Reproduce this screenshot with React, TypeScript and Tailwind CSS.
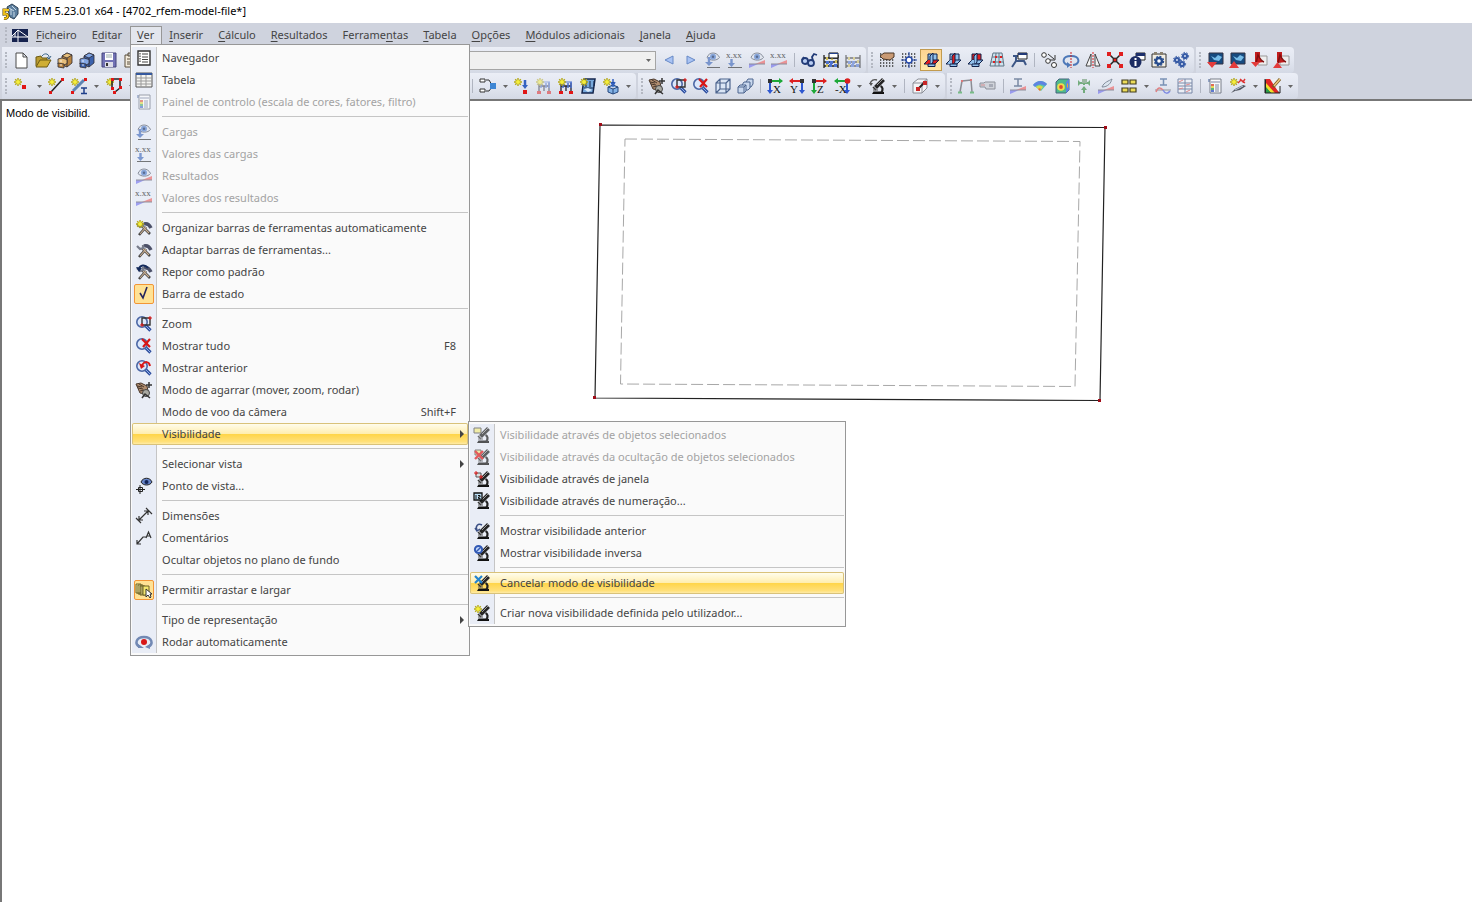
import React, { ReactNode } from "react"

const star = (
  <g>
    <path
      d="M4 0v8M0 4h8M1.2 1.2l5.6 5.6M6.8 1.2L1.2 6.8"
      stroke="#b5a914"
      strokeWidth="1.4"
      fill="none"
    />
    <circle cx="4" cy="4" r="2" fill="#f5ee3c" />
  </g>
)

const lens = (
  <g>
    <path d="M9.5 9.5l5 5" stroke="#31509f" strokeWidth="3.2" />
    <path d="M10 10l4 4" stroke="#8fb0ea" strokeWidth="1" />
    <circle cx="6" cy="6" r="5.2" fill="#dce7fa" stroke="#4a66a5" strokeWidth="1.6" />
  </g>
)

const scope = (
  <g>
    <path d="M3 16l1.500-2.500h7L15 14v2z" fill="#111" />
    <path d="M11.500 8c2.500 1 2.500 4 1 6.500" stroke="#222" strokeWidth="2.200" fill="none" />
    <path d="M6.500 9.500L14.500 1.500" stroke="#262626" strokeWidth="4" />
    <path d="M8 7l6-6" stroke="#9d9d9d" strokeWidth="1" />
    <path d="M4 9l3 3" stroke="#333" strokeWidth="1.600" />
    <path d="M4 12h5" stroke="#555" />
  </g>
)

const eye = (
  <g>
    <path d="M2 5.500C4 -0.500 12 -0.500 14.500 5.500 12 9 5 9 2 5.500z" fill="#dfe4ee" stroke="#5d6472" />
    <circle cx="8" cy="4.800" r="3" fill="#5f88cf" />
    <circle cx="8" cy="4.800" r="1.200" fill="#1f3767" />
  </g>
)

const wedge = (
  <g>
    <path d="M0 16v-4h9z" fill="#7d7df0" />
    <path d="M6 12l10-4v4z" fill="#f07070" />
    <path d="M0 12h16" stroke="#6a6a76" />
  </g>
)

const digits = (
  <text x="-1" y="6" fontSize="9" fontFamily="Liberation Serif, serif" fill="#222">
    x.xx
  </text>
)

const tools = (
  <g fill="none">
    <path d="M3 15l7-8M14 14L6 6" stroke="#444" strokeWidth="2.600" />
    <path d="M4 14l6-7M13 13L7 7" stroke="#cdb194" strokeWidth="1.100" />
    <path d="M8 4c3-1 5 0 7 4" stroke="#4b5068" strokeWidth="3.500" />
    <path d="M1 4l3 3 3-1 0-3" stroke="#777c8a" strokeWidth="2.200" />
  </g>
)

const hand = (
  <g>
    <path d="M0 2l5-1 6 3 1 5-3 3-5-1z" fill="#b08d70" stroke="#49382c" />
    <path d="M1 4l5 1M2 6l5 1M3 2l5 3M4 9l4-1" stroke="#49382c" />
    <circle cx="10" cy="11" r="3.500" fill="#a9a9a2" stroke="#444" />
    <path d="M13 0v6M10 3h6M6 16l3-4 5 4" stroke="#333" fill="none" strokeWidth="1.500" />
  </g>
)

const cabinet = (body: string, light: string) => (
  <g stroke="#2d2b33" strokeWidth="0.800">
    <path d="M5 4l5-3 5 2v8l-5 4-5-2z" fill={body} />
    <path d="M5 4l5-3 5 2-5 3z" fill={light} />
    <path d="M10 6v9" fill="none" />
    <path d="M1 7l4-1 5 1.500v4l-3 1.500-6-1z" fill={light} />
    <path d="M1 11l6 1v4l-6-1z" fill={body} />
    <path d="M3 9h2M3 13h2" stroke="#fff" />
  </g>
)

const supports = (
  <g>
    <path d="M3 5v9M13 5v9M3 8h10M8 8v5" stroke="#223" fill="none" strokeWidth="1.300" />
    <path d="M5 5v5M10 5v5M13 4v6" stroke="#4a70cf" strokeWidth="1.500" />
    <path d="M1 13h4v3H1zM11 13h4v3h-4z" fill="#e01818" />
    <path d="M3 4h11" stroke="#4a70cf" />
  </g>
)

// three crossing work planes, the active one is red
const planes = (square: string, side: string, flat: string) => (
  <g stroke="#10204a" strokeWidth="1">
    <path d="M5 2h9v7H5z" fill={square} />
    <path d="M1 12l4-4h11l-4 4z" fill={flat} />
    <path d="M7 4l3-3v9l-3 4z" fill={side} />
    <path d="M5 8h2v4H3z" fill={flat} stroke="none" />
    <path d="M5 12h7v2.500H5z" fill="#92c1ec" />
  </g>
)

const axes = (a: string, b: string, label: string, flip?: boolean) => (
  <g>
    <path d={flip ? "M1 3h12" : "M3 3h12"} stroke={a} strokeWidth="2" />
    <path d={flip ? "M4 0L0 3l4 3z" : "M12 0l4 3-4 3z"} fill={a} />
    <path d={flip ? "M13 3v11" : "M3 3v11"} stroke={b} strokeWidth="2" />
    <path d={flip ? "M10 12h6l-3 4z" : "M0 12h6l-3 4z"} fill={b} />
    <path d={flip ? "M11 1h4v4h-4z" : "M1 1h4v4H1z"} fill="#333" />
    <text
      x={flip ? 1 : 6}
      y="15"
      fontSize="11"
      fontFamily="Liberation Serif, serif"
      fill="#111"
    >
      {label}
    </text>
  </g>
)

const monitor = (
  <g>
    <path d="M2 1h14v11H2z" fill="#174b80" stroke="#334" />
    <path d="M4 4l4 2 3-3 4 2-3 4-5-1z" fill="#77bce8" />
  </g>
)

const pdf = (
  <g>
    <path d="M7 4h9v9H7z" fill="#eee" stroke="#999" />
    <path d="M4 0h5v10H4z" fill="#c11d1d" />
    <path d="M5 11l2-8c2 4 3 6 6 7" fill="#c11d1d" stroke="#7f1010" strokeWidth="1.500" />
  </g>
)

const page = (
  <g>
    <path d="M1 1h13v3H1z" fill="#7e93bd" />
    <path d="M3 1h11v14H3z" fill="#fff" stroke="#5e6470" />
    <path d="M4 4h9M8 7h4M8 9h4M8 11h4M8 13h4" stroke="#657090" />
    <path d="M4 7h3" stroke="#e05030" strokeWidth="2" />
    <path d="M4 9h3" stroke="#e6d632" strokeWidth="2" />
    <path d="M4 11h3" stroke="#40a860" strokeWidth="2" />
    <path d="M4 13h3" stroke="#4060c8" strokeWidth="2" />
  </g>
)

const abacus = (
  <g>
    <path d="M1 3v13M15 3v13M1 6h14M1 10h14M1 14h14" stroke="#222" strokeWidth="1.300" />
    <path d="M3 9h3v3H3zM7 9h3v3H7zM11 12h3v3h-3zM6 12h3v3H6z" fill="#4d72d0" />
    <path d="M3 5h2v3H3zM8 5h2v3H8zM12 8h2v3h-2zM3 12h2v3H3z" fill="#cfbd58" />
  </g>
)

const dots = (
  <path
    d="M1 2h15M1 5h15M1 8h15M1 11h15M1 14h15"
    stroke="#333"
    strokeWidth="1.300"
    strokeDasharray="1.300 1.700"
  />
)

const icons: Record<string, ReactNode> = {
  app: (
    <g>
      <path d="M5 3l5-3 6 4v6l-4 5-4-2z" fill="#5d7f9f" stroke="#2c4257" />
      <path d="M7 4l5 3M10 2l4 4M9 5v6M12 8v5" stroke="#c9dbe8" />
      <path d="M7 6H2v4c5-1 5 5 0 4.500" stroke="#5b4600" strokeWidth="3" fill="none" />
      <path d="M7 6H2v4c5-1 5 5 0 4.500" stroke="#f4c51b" strokeWidth="1.800" fill="none" />
    </g>
  ),
  bridge: (
    <g>
      <path d="M0 2h16v13H0z" fill="#16234f" />
      <path d="M0 10h16M6 3v12M0 9l6-6 10 7M3 6v4" stroke="#fff" fill="none" />
    </g>
  ),
  newFile: <path d="M3 1h7l4 4v11H3zM10 1v4h4" fill="#fff" stroke="#4a4a4a" />,
  open: (
    <g stroke="#6d5a13">
      <path d="M1 14V5l5-1 1 2h5v3" fill="#b99b31" />
      <path d="M1 15l4-7h11l-4 7z" fill="#cfae34" />
      <path d="M7 4c3-4 8-2 7 3M12 5l2 2 2-3" stroke="#3a6488" fill="none" />
    </g>
  ),
  cabinetBrown: cabinet("#b9843f", "#e7be7b"),
  cabinetBlue: cabinet("#3c62ad", "#83a6e3"),
  save: (
    <g>
      <path d="M1 1h14v14H1z" fill="#7272b5" stroke="#45457c" />
      <path d="M4 1h8v7H4z" fill="#fff" />
      <path d="M4 10h8v5H4z" fill="#dcdce8" />
      <path d="M5 3h6M5 5h6" stroke="#9aa" />
      <path d="M5 11h2v3H5z" fill="#333" />
    </g>
  ),
  clipboard: (
    <g>
      <path d="M2 3h12v12H2z" fill="#f3ebdc" stroke="#584c3b" />
      <path d="M5 1h6v3H5z" fill="#bbb" stroke="#584c3b" />
      <path d="M4 7h8M4 10h8M4 12h8" stroke="#584c3b" />
    </g>
  ),
  prev: <path d="M12 4v8L4 8z" fill="#a9c3f4" stroke="#6789c6" />,
  next: <path d="M4 4v8l8-4z" fill="#a9c3f4" stroke="#6789c6" />,
  loadEye: (
    <g>
      {eye}
      <path d="M4 5v6" stroke="#4f75c0" strokeWidth="2.400" />
      <path d="M0 10h8l-4 4z" fill="#4f75c0" />
      <path d="M2 15.500h13" stroke="#444" />
    </g>
  ),
  loadValues: (
    <g>
      {digits}
      <path d="M4.500 7v5" stroke="#4f75c0" strokeWidth="2.400" />
      <path d="M1 11h7l-3.500 4z" fill="#4f75c0" />
      <path d="M1 15.500h14" stroke="#444" />
    </g>
  ),
  resultEye: (
    <g>
      {wedge}
      {eye}
    </g>
  ),
  resultValues: (
    <g>
      {wedge}
      {digits}
    </g>
  ),
  glasses: (
    <g fill="#b9cdf2" stroke="#233c78" strokeWidth="1.800">
      <circle cx="4" cy="9" r="3" />
      <circle cx="10" cy="11" r="3" />
      <path d="M1 8l2-3M12 9l-1-4 2-3 3 1" fill="none" />
    </g>
  ),
  abacusPanel: (
    <g>
      {abacus}
      <path d="M6 1h9v5H6z" fill="#fff" stroke="#111" />
      <path d="M6 1h9v1H6z" fill="#24428d" />
    </g>
  ),
  abacus: <g opacity="0.550">{abacus}</g>,
  gridHand: (
    <g>
      {dots}
      <path d="M1 4l4-3h10v4l-4 3-7-1z" fill="#c99a74" stroke="#4a3627" />
    </g>
  ),
  gridSnap: (
    <g>
      {dots}
      <path d="M8 0v16M0 8h16" stroke="#2548a8" />
      <circle cx="8" cy="8" r="3" fill="#fff" stroke="#2548a8" strokeWidth="1.500" />
    </g>
  ),
  planeXY: planes("#92c1ec", "#92c1ec", "#e01f1f"),
  planeYZ: planes("#92c1ec", "#e01f1f", "#92c1ec"),
  planeXZ: planes("#e01f1f", "#92c1ec", "#92c1ec"),
  mesh: (
    <g>
      <path d="M4 1h9l2 13H1zM7 1L6 14M10 1v13M3 5h11M2 10h12" fill="#cfe2ee" stroke="#5e7485" />
      <path d="M6 4h2v2H6zM11 4h2v2h-2zM4 9h2v2H4zM10 9h2v2h-2z" fill="#df2020" />
    </g>
  ),
  lineProps: (
    <g>
      <path d="M1 15l4-6h8l2 4M5 9V4M2 4h6" stroke="#3c5686" strokeWidth="2" fill="none" />
      <path d="M7 1h9v6H7z" fill="#fff" stroke="#222" />
      <path d="M7 1h9v2H7z" fill="#243b78" />
    </g>
  ),
  copyNodes: (
    <g stroke="#333" fill="#fff">
      <circle cx="3" cy="3" r="2.300" />
      <circle cx="7" cy="9" r="2.300" />
      <circle cx="13" cy="13" r="2.500" />
      <path d="M7 2l6 5M14 3v5H9" fill="none" />
    </g>
  ),
  rotate: (
    <g fill="none">
      <path d="M6 13C-2 12-1 4 8 4s10 8 2 9" stroke="#4d78b8" strokeWidth="2" />
      <path d="M4 10l4 3-4 3z" fill="#4d78b8" />
      <path d="M8 0v16" stroke="#c22" strokeDasharray="2 1" />
    </g>
  ),
  mirror: (
    <g>
      <path d="M6 2v12H1zM10 2v12h5z" fill="#f3f3f3" stroke="#444" />
      <path d="M8 0v16" stroke="#d22" strokeDasharray="2 1" />
    </g>
  ),
  split: (
    <g>
      <path d="M2 2l12 12M14 2L2 14" stroke="#222" strokeWidth="1.500" />
      <path d="M0 0h4v4H0zM12 0h4v4h-4zM0 12h4v4H0zM12 12h4v4h-4z" fill="#e01f1f" />
      <circle cx="8" cy="8" r="2" fill="#e01f1f" stroke="#222" />
    </g>
  ),
  info: (
    <g>
      <path d="M7 1h9v7H7z" fill="#fff" stroke="#222" />
      <path d="M7 1h9v3H7z" fill="#1d2f6c" />
      <circle cx="6.500" cy="10" r="6" fill="#1c2c63" />
      <path d="M6.500 9v5M6.500 6v2" stroke="#fff" strokeWidth="2" />
    </g>
  ),
  gearPage: (
    <g>
      <path d="M1 2h14v13H1z" fill="#f2eee4" stroke="#333" />
      <path d="M3 0h3v3H3zM9 0h3v3H9z" fill="#8a8170" />
      <circle cx="8" cy="9" r="3" fill="#fff" stroke="#284c8d" strokeWidth="2.500" />
      <circle cx="8" cy="9" r="4.600" fill="none" stroke="#284c8d" strokeWidth="1.200" strokeDasharray="2 1.600" />
    </g>
  ),
  gears: (
    <g fill="#e6eefb" stroke="#365aa5" strokeWidth="2.200">
      <circle cx="4" cy="8" r="2" />
      <circle cx="12" cy="4" r="2" />
      <circle cx="9" cy="12" r="2" />
      <g fill="none" strokeWidth="1" strokeDasharray="1.500 1.500">
        <circle cx="4" cy="8" r="3.600" />
        <circle cx="12" cy="4" r="3.600" />
        <circle cx="9" cy="12" r="3.600" />
      </g>
    </g>
  ),
  monitorDown: (
    <g>
      {monitor}
      <path d="M0 10h10l-5 6z" fill="#e33b3b" />
    </g>
  ),
  monitorUp: (
    <g>
      {monitor}
      <path d="M0 16h10L5 9z" fill="#e33b3b" />
    </g>
  ),
  pdfDown: (
    <g>
      {pdf}
      <path d="M0 10h9l-4.500 5z" fill="#e33b3b" />
    </g>
  ),
  pdfUp: (
    <g>
      {pdf}
      <path d="M0 16h9L4.500 10z" fill="#e33b3b" />
    </g>
  ),
  node: (
    <g>
      {star}
      <path d="M8 7h4v4H8z" fill="#e01616" />
    </g>
  ),
  line: (
    <g>
      {star}
      <path d="M3 14L14 2" stroke="#222" strokeWidth="1.500" />
      <path d="M1 13h3v3H1zM13 0h3v3h-3z" fill="#e01616" />
    </g>
  ),
  member: (
    <g>
      {star}
      <path d="M2 13L13 2" stroke="#5f85b3" strokeWidth="3" />
      <path d="M0 13h3v3H0zM13 0h3v3h-3z" fill="#e01616" />
      <path d="M10 10h6M13 10v5.500M10 15.500h6" stroke="#1f3f8a" strokeWidth="1.500" />
    </g>
  ),
  surface: (
    <g>
      {star}
      <path d="M6 1h8v9l-5 4M6 1v9" stroke="#222" strokeWidth="1.500" fill="none" />
      <path d="M5 0h3v3H5zM13 0h3v3h-3zM13 8h3v3h-3zM5 9h3v3H5zM7 13h3v3H7z" fill="#e01616" />
    </g>
  ),
  merge: (
    <g>
      <path d="M0 1h5v3H0zM0 11h5v3H0z" fill="#fff" stroke="#333" />
      <path d="M6 2h3l3 5M6 13h3l3-4" stroke="#333" fill="none" />
      <path d="M10 5h6v6h-6z" fill="#3e86d4" />
    </g>
  ),
  nodalLoad: (
    <g>
      {star}
      <path d="M11 2v6" stroke="#3462c0" strokeWidth="2.500" />
      <path d="M8 7h6l-3 4z" fill="#3462c0" />
      <path d="M9 12h4v4H9z" fill="#e01616" />
    </g>
  ),
  loadFaded: (
    <g opacity="0.500">
      {supports}
      {star}
    </g>
  ),
  memberLoad: (
    <g>
      {supports}
      {star}
    </g>
  ),
  surfaceLoad: (
    <g>
      <path d="M4 1h11l-2 14H2z" fill="#78a9dc" stroke="#14264d" strokeWidth="1.500" />
      <path d="M6 3v6M10 3v6M14 3v5M4 10h10" stroke="#14264d" />
      <path d="M4 11l4-1 4 2-4 2z" fill="#dcebfa" />
      {star}
    </g>
  ),
  solidLoad: (
    <g>
      {star}
      <path d="M5 9l5-2 5 2v5l-5 2-5-2zM5 9l5 2 5-2M10 11v5" fill="#82b2e6" stroke="#25467c" />
      <path d="M10 1v5M8 4l2 4 2-4" stroke="#3462c0" strokeWidth="1.500" />
    </g>
  ),
  hand,
  zoom: (
    <g>
      {lens}
      <path d="M6 2h8v7H6z" fill="none" stroke="#333" strokeWidth="1.400" />
      <path d="M12 2h4M14 0v4M4 9h4M6 7v4" stroke="#e01616" />
    </g>
  ),
  showAll: (
    <g>
      {lens}
      <path d="M6 1l8 8M14 1L7 9" stroke="#d81616" strokeWidth="2.200" />
    </g>
  ),
  showPrevious: (
    <g>
      {lens}
      <path d="M14 6c-1-5-5-5-8-1" stroke="#d81616" strokeWidth="2" fill="none" />
      <path d="M3 3l2 6 4-3z" fill="#d81616" />
    </g>
  ),
  cube: (
    <path
      d="M1 5l4-4h10v10l-4 4H1zM1 5h10v10M11 5l4-4M5 1v10h10M5 11l-4 4"
      fill="#dbe6f5"
      stroke="#4d658e"
      strokeWidth="1.200"
    />
  ),
  boxes: (
    <g fill="#c9d8ee" stroke="#4d658e">
      <path d="M9 4l2-3h5v5l-2 3H9z" />
      <path d="M5 7l2-3h6v6l-2 2H5z" />
      <path d="M1 9l2-2h6v6l-2 2H1zM1 9h6v6M7 9l2-2" />
    </g>
  ),
  axisX: axes("#1ea838", "#2e57d0", "X"),
  axisY: axes("#dc2020", "#2e57d0", "Y", true),
  axisZ: axes("#dc2020", "#1ea838", "Z"),
  axisMinusX: (
    <g>
      {axes("#1ea838", "#2e57d0", "-X", true)}
      <circle cx="13.500" cy="3" r="2.800" fill="#dc2020" />
    </g>
  ),
  scope: (
    <g>
      {scope}
      <path d="M1 6c1-4 4-5 7-4" stroke="#555" strokeWidth="1.400" fill="none" />
      <path d="M0 5h4L2 8z" fill="#555" />
    </g>
  ),
  clipBox: (
    <g>
      <path d="M1 5l5-4h9v9l-5 5H1zM1 5h9v10M10 5l5-4" fill="#f4f4f6" stroke="#8b8f98" />
      <path d="M6 11l6-6" stroke="#222" strokeWidth="2" />
      <path d="M4 9h4v4H4zM11 3h4v4h-4z" fill="#c92626" />
    </g>
  ),
  frame: (
    <g>
      <path d="M2 14L4 3l9-1 1 12" stroke="#66676d" strokeWidth="1.500" fill="none" />
      <path d="M3 2h2v2H3zM12 1h2v2h-2z" fill="#d84a4a" />
      <path d="M0 14.500h4M12 14.500h4" stroke="#4fae5e" strokeWidth="2" />
    </g>
  ),
  camera: (
    <g>
      <path d="M0 5h4l1-1h10v7H6L5 9H0z" fill="#c9ccd2" stroke="#6b6f78" />
      <path d="M9 6h4v3H9z" fill="#8d929e" />
      <path d="M1 7h4" stroke="#c66" />
    </g>
  ),
  beamResult: (
    <g>
      {wedge}
      <path d="M4 1h8M8 1v7M4 8h8" stroke="#4d6384" strokeWidth="1.500" />
    </g>
  ),
  surfaceResult: (
    <g>
      <path d="M1 7c4-5 10-5 14-1l-6 7z" fill="#55c4b0" />
      <path d="M1 7c4-5 10-5 14-1l-2 2C9 6 6 6 3 9z" fill="#5f83e2" />
      <path d="M4 9c2-2 5-2 7 0l-3 4z" fill="#d8d84a" />
      <path d="M6 11c1-1 2-1 3 0l-1 2z" fill="#e8683c" />
    </g>
  ),
  solidResult: (
    <g>
      <path d="M2 4l3-3h10v11l-3 3H2z" fill="#4fb98c" stroke="#45647d" />
      <circle cx="7" cy="9" r="3.800" fill="#eede4d" />
      <circle cx="7" cy="9" r="1.900" fill="#e04a35" />
      <path d="M12 4l3-3v11l-3 3z" fill="#5f83e2" />
      <path d="M13 6l1-1v4l-1 1z" fill="#e0b035" />
    </g>
  ),
  reactions: (
    <g>
      <path d="M8 2v5M3 5h10M8 9v6" stroke="#47954f" strokeWidth="2" />
      <path d="M5 12l3-4 3 4zM11 5l3-3v6zM5 5L2 2v6z" fill="#47954f" />
      <path d="M6 1h5v4H6z" fill="#7fa583" />
    </g>
  ),
  brush: (
    <g>
      {wedge}
      <path d="M4 9c2-5 7-6 10-8-1 4-4 8-10 8z" fill="#d9e4ee" stroke="#5a6777" />
    </g>
  ),
  panels: (
    <g fill="#ecdc59" stroke="#413d1f" strokeWidth="1.200">
      <path d="M1 2h6v4H1zM9 2h6v4H9zM1 10h6v4H1zM9 10h6v4H9z" />
    </g>
  ),
  section: (
    <g fill="none">
      <path d="M5 1h7M8.500 1v6M5 7h7" stroke="#4d6f9d" strokeWidth="1.500" />
      <path d="M0 12h16" stroke="#777" />
      <path d="M1 14c2-5 4-5 7-2" stroke="#e05a5a" strokeWidth="1.500" />
      <path d="M8 12c2 4 5 4 7 1" stroke="#5a6ae0" strokeWidth="1.500" />
    </g>
  ),
  resultTable: (
    <g fill="#f2f5fa" stroke="#4f628a">
      <path d="M1 1h14v14H1zM8 1v14M1 5h14M1 8h14M1 11h14" />
      <path d="M2 4l4-2M9 7l4-1M2 11l4-1M9 14l4-2" stroke="#d66" />
    </g>
  ),
  colorPage: <g opacity="0.800">{page}</g>,
  wand: (
    <g>
      {star}
      <path d="M1 15l4-4 8-4 3 1-6 4-5 1z" fill="#50545f" />
      <path d="M5 12l8-4" stroke="#bcd" />
      <path d="M8 5l3-3 2 2 2-3M10 1l5 4" stroke="#d33" strokeWidth="1.400" fill="none" />
    </g>
  ),
  palette: (
    <g>
      <path d="M0 1h15v14H0z" fill="#eceff4" />
      <path d="M0 1l15 14H0z" fill="#222" />
      <path d="M1 1h4l9 14H9L1 6z" fill="#e02626" />
      <path d="M1 5l9 10H6l-5-5z" fill="#f1e12c" />
      <path d="M1 9l5 6H1z" fill="#2a9d4a" />
      <path d="M0 1v14h15V8" stroke="#222" fill="none" />
      <path d="M8 9l7-8" stroke="#7a5a20" strokeWidth="3" />
      <path d="M9 8l6-7" stroke="#edc983" strokeWidth="1.500" />
    </g>
  ),
  navigator: (
    <g>
      <path d="M2 1h12v14H2z" fill="#fff" stroke="#333" strokeWidth="1.400" />
      <path d="M6 4h6M6 7h6M6 9.500h6M6 12h6" stroke="#444" />
      <path d="M4 3v10" stroke="#222" strokeDasharray="1.500 1" />
    </g>
  ),
  table: (
    <g>
      <path d="M0 1h16v14H0z" fill="#f5f5f2" stroke="#555" />
      <path d="M0 1h16v2H0z" fill="#35599f" />
      <path d="M0 6h16M0 9h16M0 12h16M5 3v12M10 3v12" stroke="#999" />
    </g>
  ),
  toolsNew: (
    <g>
      {tools}
      {star}
    </g>
  ),
  tools,
  toolsReset: (
    <g>
      {tools}
      <path d="M3 5c1-4 6-5 9-1" stroke="#132a5c" strokeWidth="2" fill="none" />
      <path d="M0 3l3 5 3-4z" fill="#132a5c" />
    </g>
  ),
  check: <path d="M4 7l3 5 4-11" stroke="#26265e" strokeWidth="1.600" fill="none" />,
  viewpoint: (
    <g>
      <path d="M5 4c2-5 9-5 11 0-2 4-9 4-11 0z" fill="#6685c9" stroke="#222" />
      <circle cx="10.500" cy="4" r="2" fill="#122457" />
      <path d="M4 7v9M0 11.500h9M2.500 9.500h4v4h-4z" stroke="#222" fill="none" />
    </g>
  ),
  dimension: (
    <path
      d="M3 12l9-9M3 8v4h4M8 3h4v4M0 10l5 5M10 0l6 6"
      stroke="#333"
      strokeWidth="1.200"
      fill="none"
    />
  ),
  comment: (
    <path
      d="M1 14l6-7h3M1 10v4h4M10 8l2.500-6L15 8M11 6h3"
      stroke="#333"
      strokeWidth="1.200"
      fill="none"
    />
  ),
  drag: (
    <g stroke="#6c6227">
      <path d="M0 2h5v9H0zM2 3h5v9H2zM4 4h5v9H4z" fill="#ece3a0" />
      <path d="M7 4h6v9H7z" fill="#f3e770" />
      <path d="M10 7v8l2-2 2 3 1-1-1-3h2z" fill="#fff" stroke="#333" />
    </g>
  ),
  autoRotate: (
    <g fill="none">
      <path d="M4 13C-2 10 0 3 8 3s10 7 4 10" stroke="#7289b4" strokeWidth="2.500" />
      <path d="M2 10l6 4H2zM14 10l-5 3 5 2z" fill="#7289b4" />
      <circle cx="8" cy="8" r="3" fill="#d81818" />
    </g>
  ),
  visSelected: (
    <g>
      {scope}
      <path d="M0 1h7v5H0z" fill="#f4ec86" stroke="#555" />
    </g>
  ),
  visHidden: (
    <g>
      {scope}
      <path d="M1 1h6v5H1z" fill="#f4ec86" stroke="#555" />
      <path d="M1 2l8 8M9 2l-8 8" stroke="#e01c1c" strokeWidth="2.400" />
    </g>
  ),
  visWindow: (
    <g>
      {scope}
      <path d="M2 2h5v4H2z" fill="#ddd" stroke="#555" />
      <path d="M0 2h4M2 0v4M5 6h4M7 4v4" stroke="#e01c1c" />
    </g>
  ),
  visNumber: (
    <g>
      {scope}
      <path d="M0 0h8v7H0z" fill="#b9dcf5" stroke="#111" strokeWidth="1.300" />
      <path d="M2 2v4M4 2.500h2v1.500H4.500v1.500H6.500" stroke="#111" fill="none" />
    </g>
  ),
  visPrevious: (
    <g>
      {scope}
      <path d="M8 2C4 0 1 3 3 7M1 5l2 3 3-2" stroke="#3a4f85" strokeWidth="1.500" fill="none" />
    </g>
  ),
  visInverse: (
    <g>
      {scope}
      <circle cx="4.500" cy="4.500" r="3.600" fill="#c1d6fa" stroke="#3159b5" strokeWidth="2" />
      <path d="M2 7l5-5" stroke="#3159b5" strokeWidth="1.500" />
    </g>
  ),
  visCancel: (
    <g>
      {scope}
      <path d="M1 1l7 7M8 1L1 8" stroke="#2484cf" strokeWidth="2.200" />
    </g>
  ),
  visNew: (
    <g>
      {scope}
      {star}
    </g>
  ),
}

function Icon({ name, faded }: { name: string; faded?: boolean }) {
  return (
    <svg
      viewBox="0 0 16 16"
      aria-hidden="true"
      className={`size-4 shrink-0 overflow-visible ${faded ? "opacity-70" : ""}`}
    >
      {icons[name]}
    </svg>
  )
}

function Grip() {
  return (
    <span className="flex w-2 shrink-0 justify-center">
      <span className="h-4 border-l-2 border-dotted border-[#b4b8c2]" />
    </span>
  )
}

// "|" is a separator, a trailing "+" adds the drop-down arrow, a leading "~" dims the icon
function Tools({ items }: { items: string }) {
  return (
    <>
      {items.split(" ").map((item, i) => {
        if (item === "|") {
          return (
            <span key={i} className="flex w-2 shrink-0 justify-center">
              <span className="h-3.5 w-px bg-[#b0b5c1]" />
            </span>
          )
        }
        const name = item.replace(/[~+]/g, "")
        const active = name === "planeXY"
        return (
          <React.Fragment key={i}>
            <button
              type="button"
              aria-label={name}
              className={`flex h-[22px] shrink-0 items-center justify-center ${
                item.endsWith("+") ? "w-6" : "w-[22px]"
              } ${
                active
                  ? "border border-[#c29b50] bg-linear-to-b from-[#fdd391] to-[#ffe9a8]"
                  : ""
              }`}
            >
              <Icon name={name} faded={item.startsWith("~")} />
            </button>
            {item.endsWith("+") && (
              <button
                type="button"
                aria-label={`${name} menu`}
                className="flex h-[22px] w-[11px] shrink-0 items-center justify-center"
              >
                <svg viewBox="0 0 5 3" className="h-[3px] w-[5px]">
                  <path d="M0 0h5L2.500 3z" fill="#666" />
                </svg>
              </button>
            )}
          </React.Fragment>
        )
      })}
    </>
  )
}

function Band({ children }: { children: ReactNode }) {
  return (
    <div
      role="toolbar"
      className="flex h-[26px] shrink-0 items-center rounded-r-sm bg-linear-to-b from-[#ebeef6] via-[#e2e6f0] to-[#d4d9e5] pr-0.5"
    >
      <Grip />
      {children}
    </div>
  )
}

type Entry = {
  label: string
  icon?: string
  shortcut?: string
  disabled?: boolean
  checked?: boolean
  hot?: boolean
  children?: (Entry | null)[]
}

// null stands for a separator
const visibilityMenu: (Entry | null)[] = [
  { label: "Visibilidade através de objetos selecionados", icon: "visSelected", disabled: true },
  {
    label: "Visibilidade através da ocultação de objetos selecionados",
    icon: "visHidden",
    disabled: true,
  },
  { label: "Visibilidade através de janela", icon: "visWindow" },
  { label: "Visibilidade através de numeração...", icon: "visNumber" },
  null,
  { label: "Mostrar visibilidade anterior", icon: "visPrevious" },
  { label: "Mostrar visibilidade inversa", icon: "visInverse" },
  null,
  { label: "Cancelar modo de visibilidade", icon: "visCancel", hot: true },
  null,
  { label: "Criar nova visibilidade definida pelo utilizador...", icon: "visNew" },
]

const viewMenu: (Entry | null)[] = [
  { label: "Navegador", icon: "navigator" },
  { label: "Tabela", icon: "table" },
  {
    label: "Painel de controlo (escala de cores, fatores, filtro)",
    icon: "colorPage",
    disabled: true,
  },
  null,
  { label: "Cargas", icon: "loadEye", disabled: true },
  { label: "Valores das cargas", icon: "loadValues", disabled: true },
  { label: "Resultados", icon: "resultEye", disabled: true },
  { label: "Valores dos resultados", icon: "resultValues", disabled: true },
  null,
  { label: "Organizar barras de ferramentas automaticamente", icon: "toolsNew" },
  { label: "Adaptar barras de ferramentas...", icon: "tools" },
  { label: "Repor como padrão", icon: "toolsReset" },
  { label: "Barra de estado", icon: "check", checked: true },
  null,
  { label: "Zoom", icon: "zoom" },
  { label: "Mostrar tudo", icon: "showAll", shortcut: "F8" },
  { label: "Mostrar anterior", icon: "showPrevious" },
  { label: "Modo de agarrar (mover, zoom, rodar)", icon: "hand" },
  { label: "Modo de voo da câmera", shortcut: "Shift+F" },
  { label: "Visibilidade", hot: true, children: visibilityMenu },
  null,
  { label: "Selecionar vista", children: [] },
  { label: "Ponto de vista...", icon: "viewpoint" },
  null,
  { label: "Dimensões", icon: "dimension" },
  { label: "Comentários", icon: "comment" },
  { label: "Ocultar objetos no plano de fundo" },
  null,
  { label: "Permitir arrastar e largar", icon: "drag", checked: true },
  null,
  { label: "Tipo de representação", children: [] },
  { label: "Rodar automaticamente", icon: "autoRotate" },
]

function MenuRow({ entry }: { entry: Entry }) {
  return (
    <li role="none" className="relative">
      <button
        type="button"
        role="menuitem"
        disabled={entry.disabled}
        className={`flex h-[22px] w-full items-center text-left ${
          entry.disabled ? "text-[#a3a3a3]" : "text-[#444]"
        } ${
          entry.hot
            ? "rounded-xs bg-[linear-gradient(#fffef2,#ffeeb0_48%,#ffd54a_52%,#ffe07a_85%,#fff0b8)] shadow-[inset_0_0_0_1px_#d9c27a]"
            : ""
        }`}
      >
        <span
          className={`flex h-full w-[25px] shrink-0 items-center justify-center border-r ${
            entry.hot ? "border-transparent" : "border-[#c5c5c5] bg-[#e9edf6]"
          }`}
        >
          {entry.icon && (
            <span
              className={`flex size-5 items-center justify-center rounded-xs ${
                entry.checked ? "border border-[#f29536] bg-[#ffe295]" : ""
              }`}
            >
              <Icon name={entry.icon} faded={entry.disabled} />
            </span>
          )}
        </span>
        <span className="flex-1 pl-[5px] whitespace-nowrap">{entry.label}</span>
        {entry.shortcut && <span className="pr-3">{entry.shortcut}</span>}
        {entry.children && (
          <svg viewBox="0 0 4 8" className="mr-1 h-2 w-1">
            <path d="M0 0l4 4-4 4z" fill="#444" />
          </svg>
        )}
      </button>
      {entry.children && entry.children.length > 0 && (
        <Menu
          entries={entry.children}
          className="-top-0.5 left-full w-[378px]"
        />
      )}
    </li>
  )
}

function Menu({
  entries,
  className,
}: {
  entries: (Entry | null)[]
  className: string
}) {
  return (
    <ul
      role="menu"
      className={`absolute z-10 border border-[#979797] bg-[#fafafa] px-px py-0.5 text-[11px] leading-4 ${className}`}
    >
      {entries.map((entry, i) =>
        entry ? (
          <MenuRow key={i} entry={entry} />
        ) : (
          <li key={i} role="separator" className="flex h-2 items-center">
            <span className="h-full w-[25px] shrink-0 border-r border-[#c5c5c5] bg-[#e9edf6]" />
            <span className="ml-[5px] h-px flex-1 bg-[#c5c5c5]" />
          </li>
        ),
      )}
    </ul>
  )
}

// label and the index of its underlined access key
const menuBar: [string, number][] = [
  ["Ficheiro", 0],
  ["Editar", 1],
  ["Ver", 0],
  ["Inserir", 0],
  ["Cálculo", 0],
  ["Resultados", 0],
  ["Ferramentas", 7],
  ["Tabela", 0],
  ["Opções", 0],
  ["Módulos adicionais", 0],
  ["Janela", 0],
  ["Ajuda", 0],
]

export default function App() {
  return (
    <div className="flex min-h-screen flex-col overflow-hidden bg-white font-['Noto_Sans','Open_Sans',sans-serif]">
      <header className="flex h-[23px] items-center gap-[5px] pl-0.5 text-[11px] text-black">
        <Icon name="app" />
        <h1>RFEM 5.23.01 x64 - [4702_rfem-model-file*]</h1>
      </header>

      <nav className="flex h-6 items-center bg-[#cfd3de] pl-0.5 text-[11px] leading-4 text-[#444]">
        <Grip />
        <span className="flex w-[19px] justify-center">
          <Icon name="bridge" />
        </span>
        {menuBar.map(([label, key]) => {
          const open = label === "Ver"
          return (
            <div key={label} className="relative">
              <button
                type="button"
                className={`h-[19px] border pr-[7px] pl-1.5 whitespace-nowrap ${
                  open
                    ? "border-[#979797] border-b-transparent bg-[#e3e6ed]"
                    : "border-transparent"
                }`}
              >
                {label.slice(0, key)}
                <span className="underline underline-offset-2">{label[key]}</span>
                {label.slice(key + 1)}
              </button>
              {open && (
                <Menu entries={viewMenu} className="top-[18px] left-0 w-[340px]" />
              )}
            </div>
          )
        })}
      </nav>

      <div className="flex flex-col border-b-2 border-[#777] bg-[#cfd3de]">
        <div className="flex gap-0.5 pl-0.5">
          <Band>
            <Tools items="newFile open cabinetBrown cabinetBlue save clipboard" />
            <span className="w-40 shrink-0" />
            <span className="relative mr-0.5 flex">
              <select
                aria-label="Caso de carga"
                className="h-[19px] w-[354px] appearance-none border border-[#a5a5a5] bg-[#f0f0f0]"
              />
              <svg
                viewBox="0 0 5 3"
                className="pointer-events-none absolute top-2 right-[5px] h-[3px] w-[5px]"
              >
                <path d="M0 0h5L2.500 3z" fill="#666" />
              </svg>
            </span>
            <Tools items="prev next ~loadEye ~loadValues ~resultEye ~resultValues | glasses abacusPanel abacus" />
          </Band>
          <Band>
            <Tools items="gridHand gridSnap planeXY planeYZ planeXZ mesh lineProps | copyNodes rotate mirror split info gearPage gears" />
          </Band>
          <Band>
            <Tools items="monitorDown monitorUp pdfDown pdfUp" />
          </Band>
        </div>
        <div className="flex gap-0.5 pl-0.5">
          <Band>
            <Tools items="node+ line member+ surface+" />
            <span className="w-[331px] shrink-0" />
            <Tools items="| merge+ nodalLoad loadFaded memberLoad surfaceLoad solidLoad+" />
          </Band>
          <Band>
            <Tools items="hand zoom showAll cube boxes | axisX axisY axisZ axisMinusX+ scope+ | clipBox+" />
          </Band>
          <Band>
            <Tools items="~frame ~camera | ~beamResult surfaceResult solidResult ~reactions ~brush panels+ ~section ~resultTable | colorPage wand+ palette+" />
          </Band>
        </div>
      </div>

      <main className="relative flex flex-1 border-l-2 border-[#777]">
        <p className="absolute top-1.5 left-1 font-['Liberation_Sans',sans-serif] text-[11px] leading-3 text-black">
          Modo de visibilid.
        </p>
        <svg className="min-h-[400px] flex-1" aria-label="Modelo">
          <path
            d="M598 24l505 2.500-5 273-505-2.500z"
            fill="none"
            stroke="#222"
            strokeWidth="1.200"
          />
          <path
            d="M623 38l455 2.500-5 245-454.500-2.500z"
            fill="none"
            stroke="#a8a8a8"
            strokeDasharray="12 4"
          />
          <g fill="#a00c18">
            <rect x="597" y="22" width="3" height="3" />
            <rect x="1102" y="25" width="3" height="3" />
            <rect x="1096" y="298" width="3" height="3" />
            <rect x="591" y="295" width="3" height="3" />
          </g>
        </svg>
      </main>
    </div>
  )
}
